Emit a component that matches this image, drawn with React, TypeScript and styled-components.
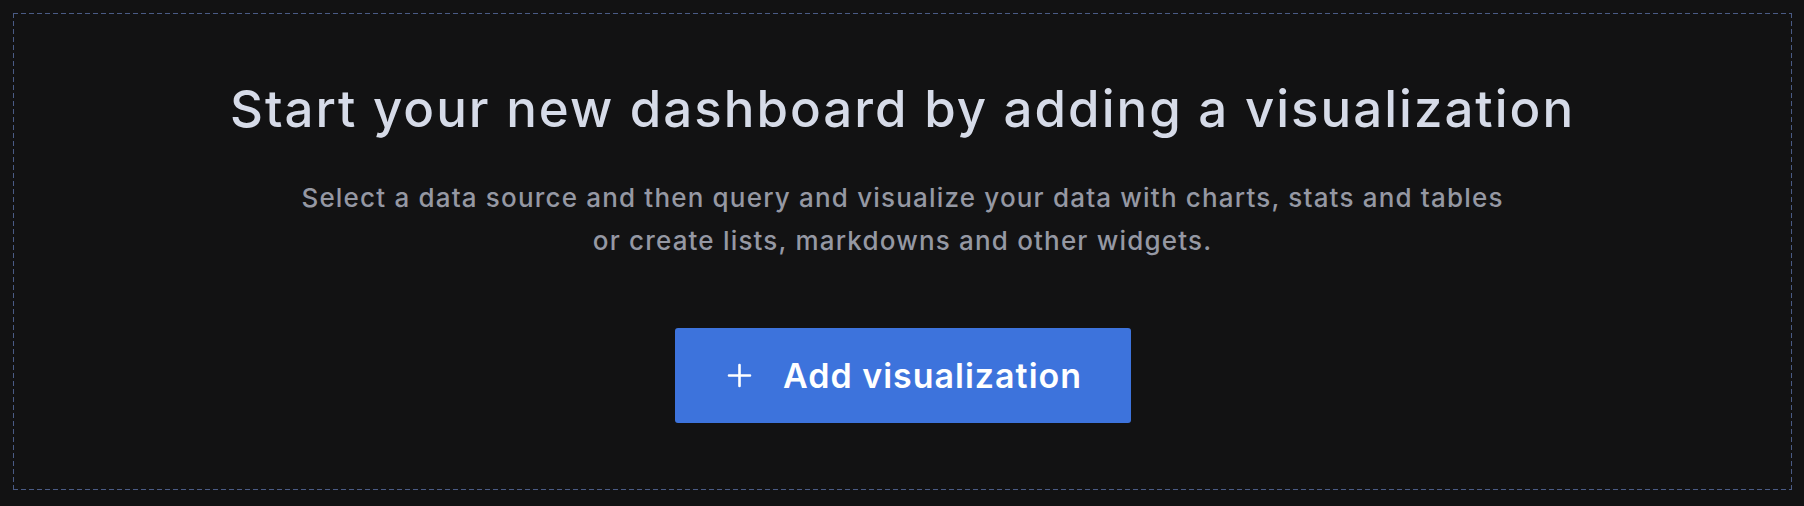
import React from "react";
import styled, { createGlobalStyle } from "styled-components";

const GlobalStyle = createGlobalStyle`
  html, body {
    margin: 0;
    padding: 0;
    background: #121213;
  }
  body {
    font-family: Inter, "Noto Sans", sans-serif;
    -webkit-font-smoothing: antialiased;
  }
`;

const dash = "#4a5b85";

const Page = styled.div`
  box-sizing: border-box;
  width: 1804px;
  height: 506px;
  padding: 13px 12px 16px 13px;
  background: #121213;
`;

const EmptyPanel = styled.section`
  box-sizing: border-box;
  height: 100%;
  padding: 1px 1px 3px;
  background:
    repeating-linear-gradient(90deg, ${dash} 0 5px, transparent 5px 8px) top left / 100% 1px no-repeat,
    repeating-linear-gradient(90deg, ${dash} 0 5px, transparent 5px 8px) bottom left / 100% 1px no-repeat,
    repeating-linear-gradient(180deg, ${dash} 0 5px, transparent 5px 8px) top left / 1px 100% no-repeat,
    repeating-linear-gradient(180deg, ${dash} 0 5px, transparent 5px 8px) top right / 1px 100% no-repeat;
  display: flex;
  flex-direction: column;
  align-items: center;
  justify-content: center;
`;

const Title = styled.h1`
  margin: 0;
  font-family: Inter, sans-serif;
  font-size: 51px;
  line-height: 60px;
  font-weight: 500;
  letter-spacing: 2px;
  color: #d6dbe8;
  text-align: center;
  white-space: nowrap;
`;

const Description = styled.p`
  margin: 37px 0 0;
  font-family: Inter, sans-serif;
  font-size: 26px;
  line-height: 43px;
  font-weight: 500;
  letter-spacing: 1.18px;
  color: #9598a3;
  text-align: center;
  white-space: nowrap;
`;

const PrimaryButton = styled.button`
  margin-top: 66px;
  box-sizing: border-box;
  width: 456px;
  height: 95px;
  display: flex;
  align-items: center;
  justify-content: center;
  gap: 31px;
  padding: 0 0 0 4px;
  border: none;
  border-radius: 3px;
  background: #3d73dc;
  color: #ffffff;
  font-family: Inter, sans-serif;
  font-size: 34px;
  font-weight: 600;
  letter-spacing: 1px;
  cursor: pointer;
`;

const PlusIcon = () => (
  <svg width="25" height="25" viewBox="0 0 25 25" fill="none" aria-hidden="true">
    <path d="M12.5 2v21M2 12.5h21" stroke="#ffffff" strokeWidth="2.6" strokeLinecap="round" />
  </svg>
);

export default function App() {
  return (
    <>
      <GlobalStyle />
      <Page>
        <EmptyPanel>
          <Title>Start your new dashboard by adding a visualization</Title>
          <Description>
            Select a data source and then query and visualize your data with charts, stats and tables
            <br />
            or create lists, markdowns and other widgets.
          </Description>
          <PrimaryButton>
            <PlusIcon />
            <span>Add visualization</span>
          </PrimaryButton>
        </EmptyPanel>
      </Page>
    </>
  );
}
